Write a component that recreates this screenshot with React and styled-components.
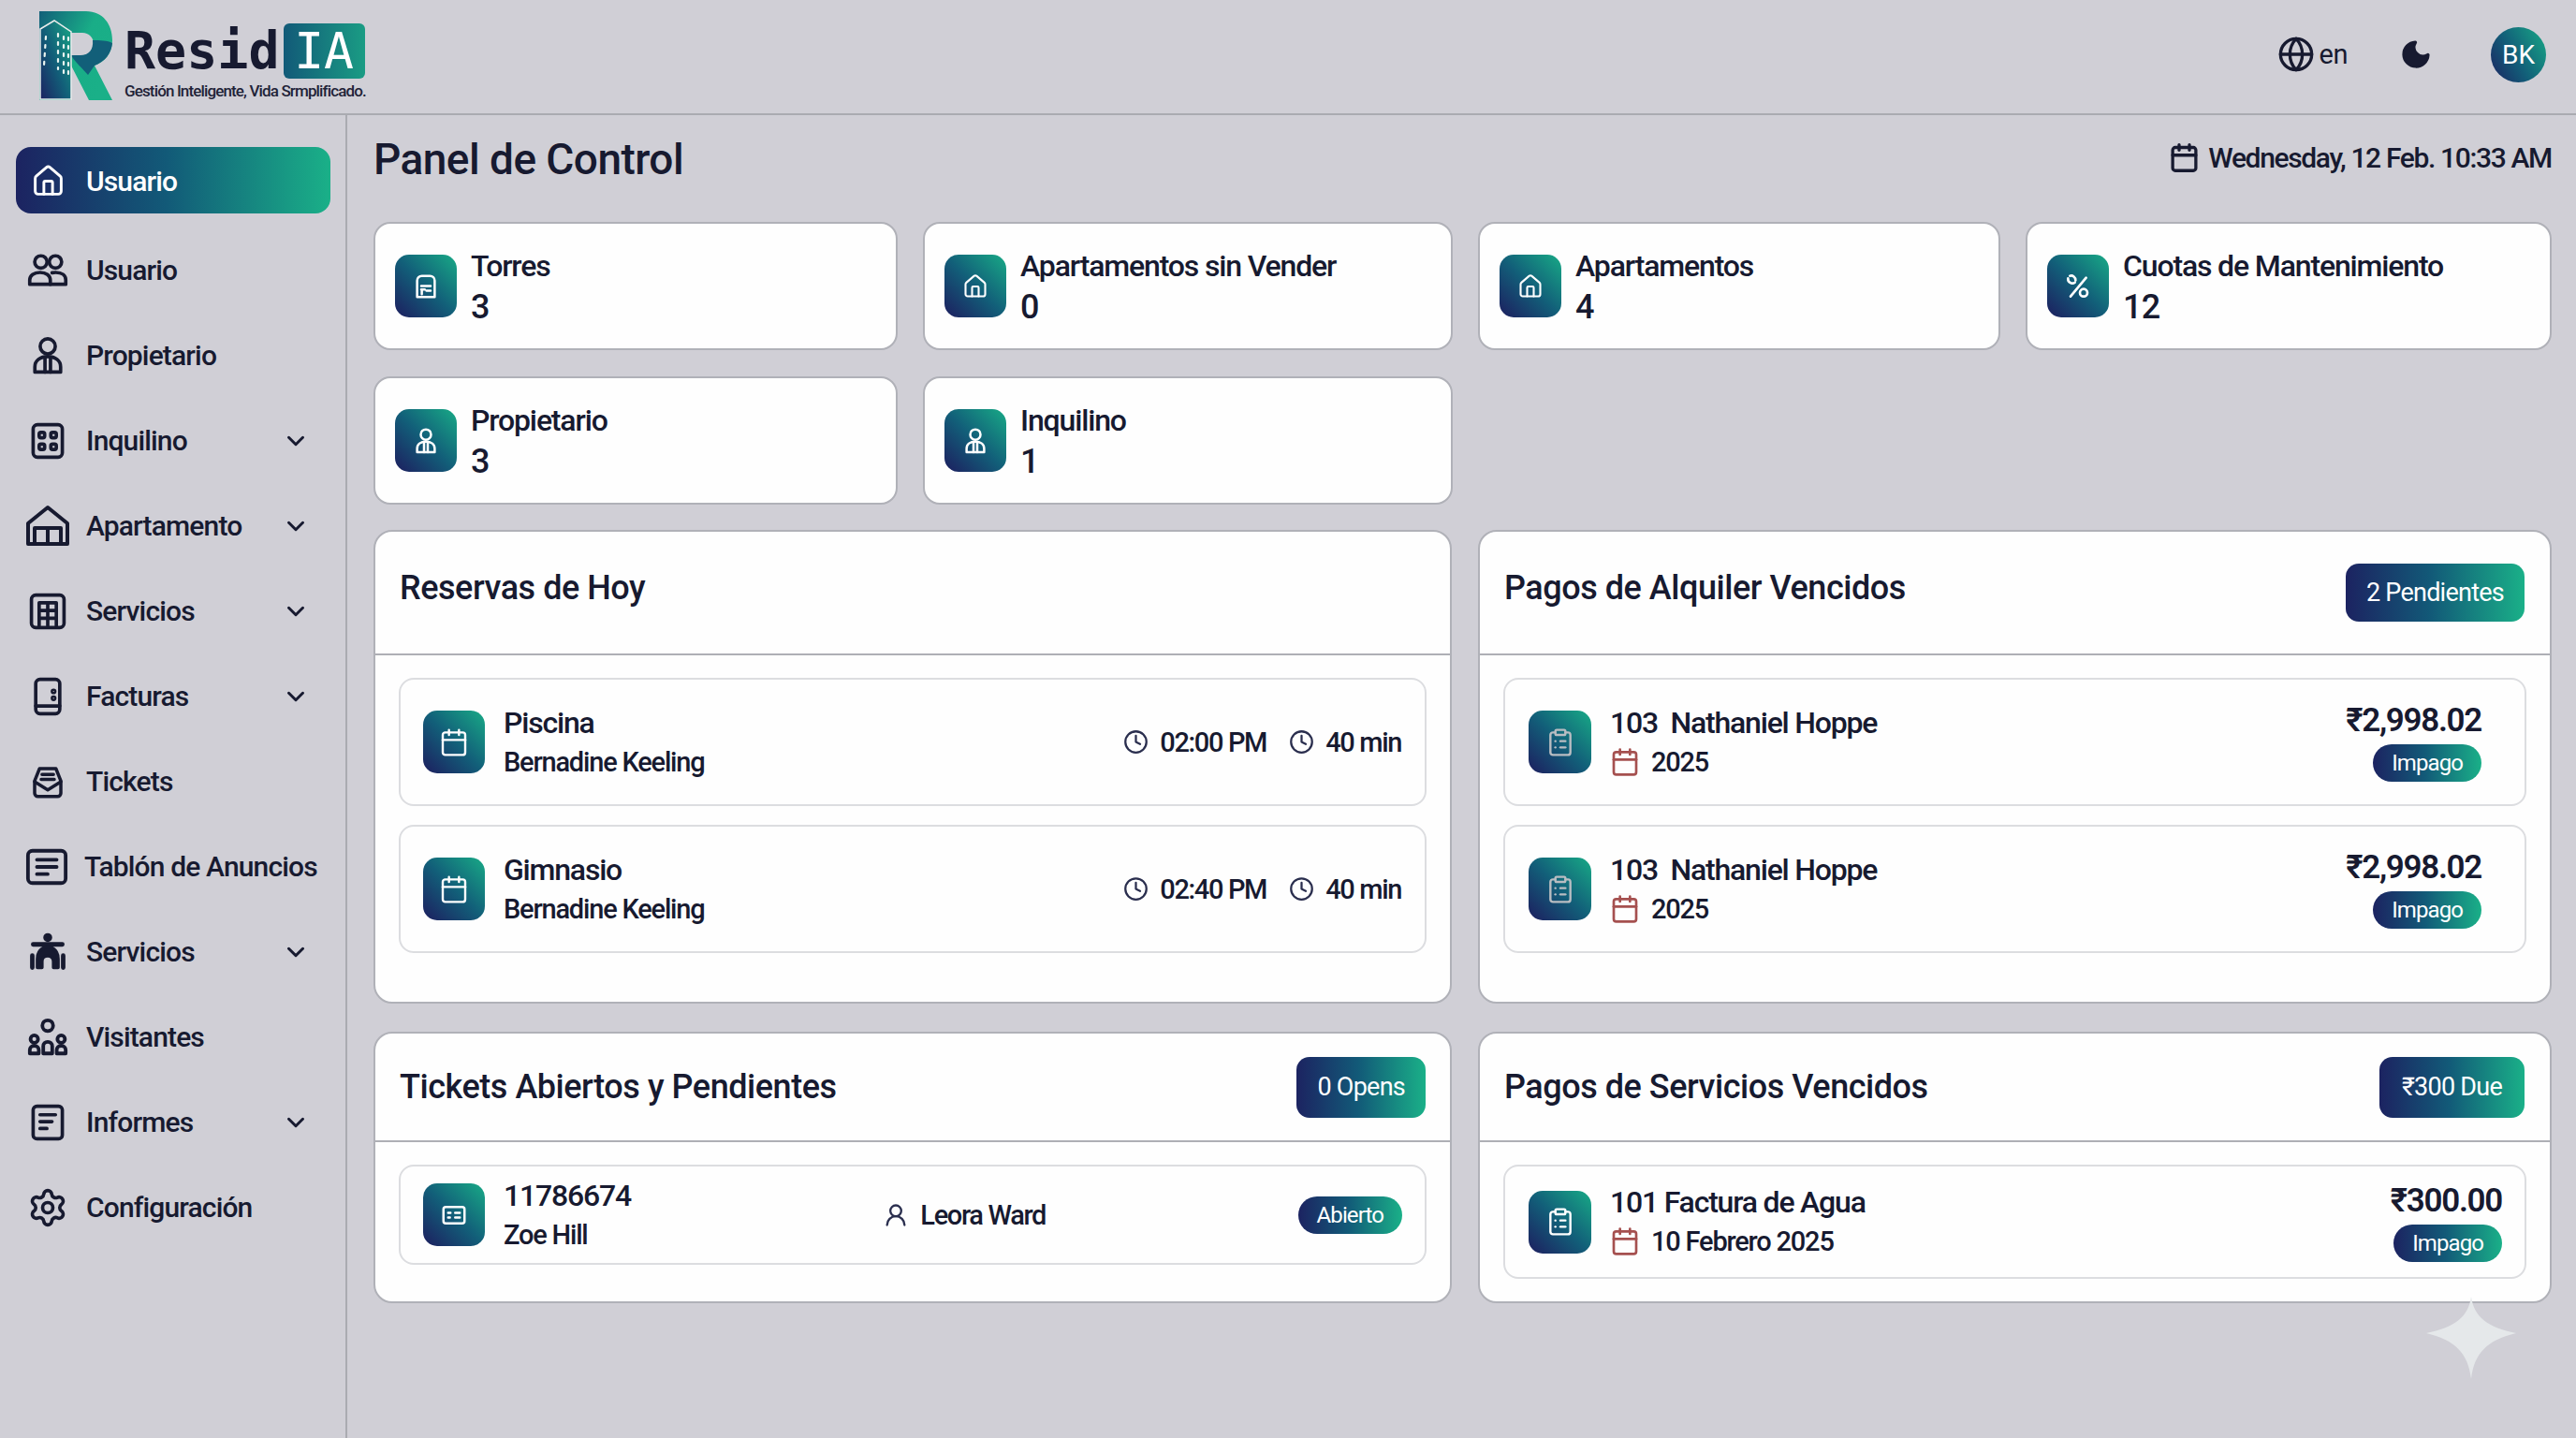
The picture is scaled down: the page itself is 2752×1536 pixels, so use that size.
import React from "react";
import styled, { createGlobalStyle } from "styled-components";
import { House, ChevronDown, Settings, Globe, Moon, Calendar, Clock, ClipboardList, UserRound } from "lucide-react";

const NAVY = "#1c2361";
const BAR = "linear-gradient(90deg, #1c2361 0%, #125a78 48%, #1ab088 100%)";
const TILE = "linear-gradient(45deg, #1c2361 4%, #125f79 50%, #18aa86 100%)";
const INK = "#171a30";

const Global = createGlobalStyle`
  html, body { margin: 0; padding: 0; }
  body {
    background: #d0cfd6;
    color: ${INK};
    font-family: Roboto, "Liberation Sans", sans-serif;
  }
  * { box-sizing: border-box; }
`;

const Page = styled.div`
  position: relative;
  width: 2752px;
  height: 1536px;
  overflow: hidden;
  background: #d0cfd6;
`;

const TopBar = styled.header`
  height: 123px;
  border-bottom: 2px solid #aaabb1;
  display: flex;
  align-items: center;
  justify-content: space-between;
  padding: 0 32px 5px 42px;
`;

const Brand = styled.div`
  display: flex;
  align-items: flex-start;
  gap: 13px;
  padding-top: 2px;
`;

const BrandText = styled.div`
  display: flex;
  flex-direction: column;
  padding-top: 13px;
`;

const Wordmark = styled.div`
  display: flex;
  align-items: center;
  gap: 4px;
  height: 59px;
  font-family: "DejaVu Sans Mono", "Liberation Mono", monospace;
  font-weight: 700;
  font-size: 55px;
  color: ${INK};
`;

const WordmarkBox = styled.span`
  width: 87px;
  height: 59px;
  border-radius: 6px;
  display: flex;
  align-items: center;
  justify-content: center;
  color: #fff;
  font-weight: 400;
  font-size: 53px;
  background: linear-gradient(90deg, #125a78, #1a9c84);
`;

const Tagline = styled.div`
  margin-top: 3px;
  font-size: 17px;
  font-weight: 500;
  letter-spacing: -0.86px;
  white-space: nowrap;
  color: #1f2338;
`;

const TopActions = styled.div`
  display: flex;
  align-items: center;
`;

const Lang = styled.div`
  display: flex;
  align-items: center;
  gap: 5px;
  font-size: 29px;
  letter-spacing: -0.5px;
  margin-right: 55px;
`;

const Avatar = styled.div`
  width: 59px;
  height: 59px;
  margin-left: 62px;
  border-radius: 50%;
  display: flex;
  align-items: center;
  justify-content: center;
  color: #fff;
  font-size: 28px;
  background: linear-gradient(60deg, #1c2361 0%, #125f79 45%, #18aa86 100%);
`;

const Columns = styled.div`
  display: flex;
  height: 1413px;
`;

const Sidebar = styled.nav`
  width: 371px;
  border-right: 2px solid #aaabb1;
  padding: 34px 16px 0 17px;
  display: flex;
  flex-direction: column;
  gap: 20px;
`;

const NavItem = styled.div`
  height: 71px;
  flex-shrink: 0;
  display: flex;
  align-items: center;
  padding: 2px 22px 0 10px;
  border-radius: 16px;
  font-size: 30px;
  font-weight: 500;
  letter-spacing: -0.85px;
  color: ${p => (p.$active ? "#fff" : INK)};
  background: ${p => (p.$active ? BAR : "transparent")};
  margin-bottom: ${p => (p.$active ? "4px" : "0")};
`;

const NavIcon = styled.span`
  width: 48px;
  height: 48px;
  margin-right: 17px;
  display: flex;
  align-items: center;
  justify-content: center;
`;

const NavLabel = styled.span`
  flex: 1;
  white-space: nowrap;
`;

const Main = styled.main`
  flex: 1;
  padding: 0 26px 0 28px;
`;

const PageHead = styled.div`
  height: 94px;
  margin-bottom: 20px;
  display: flex;
  align-items: center;
  justify-content: space-between;
`;

const PageTitle = styled.h1`
  margin: 0;
  font-size: 46px;
  font-weight: 500;
  letter-spacing: -0.55px;
`;

const DateLine = styled.div`
  display: flex;
  align-items: center;
  gap: 9px;
  font-size: 30px;
  font-weight: 500;
  letter-spacing: -1.35px;
  padding-bottom: 4px;
`;

const StatGrid = styled.section`
  display: grid;
  grid-template-columns: 560px 566px 558px 1fr;
  grid-auto-rows: 137px;
  column-gap: 27px;
  row-gap: 28px;
`;

const StatCard = styled.div`
  display: flex;
  align-items: center;
  gap: 15px;
  padding-left: 21px;
  background: #fefefe;
  border: 2px solid #b0b1b8;
  border-radius: 18px;
`;

const Tile = styled.span`
  width: ${p => p.$w || 66}px;
  height: 67px;
  flex-shrink: 0;
  border-radius: 15px;
  display: flex;
  align-items: center;
  justify-content: center;
  color: ${p => p.$tint || "#fff"};
  background: ${TILE};
`;

const StatText = styled.div`
  display: flex;
  flex-direction: column;
  gap: 8px;
  font-size: 32px;
  line-height: 36px;
  font-weight: 500;
  letter-spacing: -1.15px;
`;

const StatValue = styled.span`
  font-size: 36px;
  letter-spacing: -0.6px;
`;

const PanelGrid = styled.section`
  margin-top: 27px;
  display: grid;
  grid-template-columns: 1152px 1fr;
  column-gap: 28px;
  row-gap: 30px;
`;

const Panel = styled.article`
  display: flex;
  flex-direction: column;
  background: #fefefe;
  border: 2px solid #b0b1b8;
  border-radius: 20px;
  overflow: hidden;
`;

const PanelHead = styled.div`
  height: ${p => p.$h}px;
  flex-shrink: 0;
  display: flex;
  align-items: center;
  justify-content: space-between;
  padding: 0 ${p => p.$right || 26}px 0 26px;
  border-bottom: 2px solid #aeafb5;
`;

const PanelTitle = styled.h2`
  margin: 0 0 ${p => p.$lift || 0}px;
  font-size: 36px;
  font-weight: 500;
  letter-spacing: -0.46px;
`;

const CountBadge = styled.span`
  height: ${p => p.$h}px;
  padding: 0 ${p => p.$pad || 22}px;
  border-radius: 14px;
  display: flex;
  align-items: center;
  color: #fff;
  font-size: 27px;
  letter-spacing: -0.75px;
  background: ${BAR};
`;

const PanelBody = styled.div`
  flex: 1;
  padding: 24px 25px ${p => p.$pb || 24}px;
  display: flex;
  flex-direction: column;
  gap: 20px;
`;

const Row = styled.div`
  height: ${p => p.$h}px;
  display: flex;
  align-items: center;
  justify-content: space-between;
  padding: 0 ${p => p.$right || 24}px 0 ${p => p.$left || 24}px;
  border: 2px solid #dcdde0;
  border-radius: 16px;
`;

const RowLead = styled.div`
  display: flex;
  align-items: center;
  gap: 20px;
`;

const RowText = styled.div`
  display: flex;
  flex-direction: column;
  gap: 4px;
`;

const RowTitle = styled.div`
  font-size: 32px;
  line-height: 38px;
  font-weight: 500;
  letter-spacing: -1.2px;
  white-space: pre;
`;

const RowSub = styled.div`
  display: flex;
  align-items: center;
  gap: 12px;
  font-size: 29px;
  font-weight: 500;
  line-height: 38px;
  letter-spacing: -1.2px;
`;

const Meta = styled.div`
  display: flex;
  align-items: center;
  gap: 12px;
  font-size: 29px;
  font-weight: 500;
  letter-spacing: -1.35px;
`;

const MetaGroup = styled.div`
  display: flex;
  align-items: center;
  gap: 24px;
`;

const Amounts = styled.div`
  display: flex;
  flex-direction: column;
  align-items: flex-end;
  gap: 5px;
`;

const Amount = styled.div`
  font-size: 35px;
  line-height: 40px;
  font-weight: 600;
  letter-spacing: -1.3px;
`;

const Pill = styled.span`
  height: 40px;
  padding: 0 20px;
  border-radius: 20px;
  display: flex;
  align-items: center;
  color: #fff;
  font-size: 24px;
  letter-spacing: -0.9px;
  background: ${BAR};
`;

const Sparkle = styled.svg`
  position: absolute;
  left: 2592px;
  top: 1385px;
`;

const line = { fill: "none", stroke: "currentColor", strokeWidth: 2, strokeLinecap: "round", strokeLinejoin: "round" };

const Draw = ({ size = 44, children }) => (
  <svg width={size} height={size} viewBox="0 0 24 24" {...line}>{children}</svg>
);

const UsersIcon = () => (
  <Draw>
    <circle cx="8" cy="7" r="3.6" /><circle cx="16.5" cy="7" r="3.6" />
    <path d="M1.5 20v-2.5c0-2.6 2.4-4.4 6-4.4s6 1.8 6 4.4V20z" />
    <path d="M14.5 13.3c.7-.2 1.4-.2 2.2-.2 3.6 0 5.8 1.8 5.8 4.4V20h-9" />
  </Draw>
);
const OwnerIcon = ({ size = 44 }) => (
  <Draw size={size}>
    <circle cx="12" cy="6.5" r="4.4" />
    <path d="M4.5 21.5v-3c0-3.6 3-6 7.5-6s7.5 2.4 7.5 6v3z" />
    <path d="M10.4 13v8.5M13.6 13v8.5" />
  </Draw>
);
const TenantIcon = () => (
  <Draw>
    <rect x="3.5" y="2.5" width="17" height="19" rx="2.5" />
    <rect x="7" y="7" width="3.2" height="3.2" rx="1" /><rect x="13.8" y="7" width="3.2" height="3.2" rx="1" />
    <rect x="7" y="13.8" width="3.2" height="3.2" rx="1" /><rect x="13.8" y="13.8" width="3.2" height="3.2" rx="1" />
  </Draw>
);
const BarnIcon = () => (
  <Draw size={50}>
    <path d="M1.5 21.5V10.5L12 2l10.5 8.5v11z" />
    <path d="M5 21.5V13h14v8.5M12 13v8.5" />
  </Draw>
);
const BuildingIcon = () => (
  <Draw>
    <rect x="2.5" y="2.5" width="19" height="19" rx="2.5" />
    <path d="M7 20.5V7h10v13.5M7 11.5h10M7 16h10M12 7v13.5" />
  </Draw>
);
const DeviceIcon = () => (
  <Draw>
    <rect x="5" y="2" width="14" height="20" rx="2.5" />
    <path d="M5 17.5h14" />
    <circle cx="15.4" cy="9" r=".7" /><circle cx="15.4" cy="13" r=".7" />
  </Draw>
);
const TrayIcon = () => (
  <Draw size={42}>
    <path d="M7 4h10l3 7.5V19a2 2 0 0 1-2 2H6a2 2 0 0 1-2-2v-7.5z" />
    <path d="M4 12l8 5 8-5M8.5 7.5h7M8 10.5h8" />
  </Draw>
);
const BoardIcon = () => (
  <Draw size={46}>
    <rect x="1.5" y="3" width="21" height="18" rx="2.5" />
    <path d="M6.5 8h11M6.5 12h11M6.5 16h6" />
  </Draw>
);
const ConciergeIcon = () => (
  <Draw size={44}>
    <circle cx="12" cy="3.5" r="1.6" fill="currentColor" />
    <path d="M3.5 7.5h17" strokeWidth="2.6" />
    <path d="M6 21v-5c0-4 2.4-7 6-7s6 3 6 7v5h-2.6v-3.5c0-2-1.3-3.3-3.4-3.3s-3.4 1.3-3.4 3.3V21z" fill="currentColor" />
    <path d="M3 14v7M21 14v7" strokeWidth="2.6" />
  </Draw>
);
const VisitorsIcon = () => (
  <Draw size={46}>
    <circle cx="12" cy="5.5" r="3" />
    <circle cx="4.5" cy="13" r="2.1" /><circle cx="19.5" cy="13" r="2.1" />
    <path d="M2 21v-2c0-1.3 1-2.3 2.5-2.3S7 17.7 7 19v2zM17 21v-2c0-1.3 1-2.3 2.5-2.3S22 17.7 22 19v2z" />
    <path d="M9.5 21v-4c0-1.5 1-2.5 2.5-2.5s2.5 1 2.5 2.5v4z" />
  </Draw>
);
const ReportIcon = () => (
  <Draw>
    <rect x="3.5" y="2.5" width="17" height="19" rx="2.2" />
    <path d="M7.5 7.5h9M7.5 11.5h7M7.5 15.5h4" />
  </Draw>
);
const TowerIcon = () => (
  <Draw size={30}>
    <path d="M4.5 21V7a4 4 0 0 1 4-4h7a4 4 0 0 1 4 4v14z" />
    <path d="M8 11.5h8M8 14.5h3M12.5 15.5h3.5M8.500 14.5v4" />
  </Draw>
);
const FeeIcon = () => (
  <Draw size={32}>
    <path d="M18.5 5L6 20" />
    <path d="M4 5.5a3.5 3.5 0 0 0 5.500 3.300M5.500 3.500A3.500 3.500 0 0 1 10 7" />
    <circle cx="16.5" cy="17" r="3" />
  </Draw>
);
const TicketIcon = () => (
  <Draw size={30}>
    <rect x="3" y="5" width="18" height="14" rx="2" />
    <path d="M7 10h2M13 10h4M7 14h1.5M13 14h4" />
  </Draw>
);

const navItems = [
  { label: "Usuario", icon: <House size={37} strokeWidth={1.9} />, active: true },
  { label: "Usuario", icon: <UsersIcon /> },
  { label: "Propietario", icon: <OwnerIcon /> },
  { label: "Inquilino", icon: <TenantIcon />, sub: true },
  { label: "Apartamento", icon: <BarnIcon />, sub: true },
  { label: "Servicios", icon: <BuildingIcon />, sub: true },
  { label: "Facturas", icon: <DeviceIcon />, sub: true },
  { label: "Tickets", icon: <TrayIcon /> },
  { label: "Tablón de Anuncios", icon: <BoardIcon /> },
  { label: "Servicios", icon: <ConciergeIcon />, sub: true },
  { label: "Visitantes", icon: <VisitorsIcon /> },
  { label: "Informes", icon: <ReportIcon />, sub: true },
  { label: "Configuración", icon: <Settings size={44} strokeWidth={2} /> },
];

const stats = [
  { title: "Torres", value: "3", icon: <TowerIcon /> },
  { title: "Apartamentos sin Vender", value: "0", icon: <House size={28} strokeWidth={1.8} /> },
  { title: "Apartamentos", value: "4", icon: <House size={28} strokeWidth={1.8} /> },
  { title: "Cuotas de Mantenimiento", value: "12", icon: <FeeIcon /> },
  { title: "Propietario", value: "3", icon: <OwnerIcon size={30} /> },
  { title: "Inquilino", value: "1", icon: <OwnerIcon size={30} /> },
];

const bookings = [
  { name: "Piscina", time: "02:00 PM" },
  { name: "Gimnasio", time: "02:40 PM" },
];

const Logo = () => (
  <svg width="78" height="95" viewBox="0 0 78 95">
    <defs>
      <linearGradient id="logoR" x1="0" y1="0" x2="1" y2="0.6">
        <stop offset="0" stopColor="#125f79" />
        <stop offset="0.6" stopColor="#19ad87" />
        <stop offset="1" stopColor="#1ab088" />
      </linearGradient>
      <linearGradient id="logoTower" x1="0" y1="1" x2="1" y2="0.1">
        <stop offset="0" stopColor={NAVY} />
        <stop offset="0.5" stopColor="#125f79" />
        <stop offset="1" stopColor="#17a184" />
      </linearGradient>
    </defs>
    <path fillRule="evenodd" fill="url(#logoR)" d="M0 0H50C68 0 78 14 78 31C78 45 70 54 59 58L78 95H53L34 58V95H0ZM34 23V47H46C53 47 58 42 58 35C58 28 53 23 46 23Z" />
    <path fill="#125f79" d="M44 47C53 47 58 41 57 31C64 31 73 31 78 34C77 45 70 54 59 58L52 68C47 62 38 54 34 47Z" />
    <path fill="url(#logoTower)" stroke="#e9ecec" strokeWidth="1.5" d="M1 19L16 10L34 22V94H1Z" />
    <path fill="none" stroke="#e9f4f0" strokeWidth="2.2" strokeLinecap="round" strokeDasharray="3 6" d="M7 27L5 58M20 24V62M26 27V68M31 28V70" />
  </svg>
);

function App() {
  return (
    <Page>
      <Global />
      <TopBar>
        <Brand>
          <Logo />
          <BrandText>
            <Wordmark>Resid<WordmarkBox>IA</WordmarkBox></Wordmark>
            <Tagline>Gestión Inteligente, Vida Srmplificado.</Tagline>
          </BrandText>
        </Brand>
        <TopActions>
          <Lang><Globe size={40} strokeWidth={2} />en</Lang>
          <Moon size={36} fill={INK} strokeWidth={1.5} />
          <Avatar>BK</Avatar>
        </TopActions>
      </TopBar>
      <Columns>
        <Sidebar>
          {navItems.map((item, i) => (
            <NavItem key={i} $active={item.active}>
              <NavIcon>{item.icon}</NavIcon>
              <NavLabel>{item.label}</NavLabel>
              {item.sub && <ChevronDown size={30} strokeWidth={2.4} />}
            </NavItem>
          ))}
        </Sidebar>
        <Main>
          <PageHead>
            <PageTitle>Panel de Control</PageTitle>
            <DateLine><Calendar size={33} strokeWidth={2.4} />Wednesday, 12 Feb. 10:33 AM</DateLine>
          </PageHead>
          <StatGrid>
            {stats.map(s => (
              <StatCard key={s.title}>
                <Tile>{s.icon}</Tile>
                <StatText><span>{s.title}</span><StatValue>{s.value}</StatValue></StatText>
              </StatCard>
            ))}
          </StatGrid>
          <PanelGrid>
            <Panel>
              <PanelHead $h={132}><PanelTitle $lift={10}>Reservas de Hoy</PanelTitle></PanelHead>
              <PanelBody $pb={52}>
                {bookings.map(b => (
                  <Row key={b.name} $h={137} $right={25}>
                    <RowLead>
                      <Tile><Calendar size={32} strokeWidth={1.8} /></Tile>
                      <RowText>
                        <RowTitle>{b.name}</RowTitle>
                        <RowSub>Bernadine Keeling</RowSub>
                      </RowText>
                    </RowLead>
                    <MetaGroup>
                      <Meta><Clock size={27} strokeWidth={2} color="#2a2e4e" />{b.time}</Meta>
                      <Meta><Clock size={27} strokeWidth={2} color="#2a2e4e" />40 min</Meta>
                    </MetaGroup>
                  </Row>
                ))}
              </PanelBody>
            </Panel>
            <Panel>
              <PanelHead $h={132} $right={27}>
                <PanelTitle $lift={10}>Pagos de Alquiler Vencidos</PanelTitle>
                <CountBadge $h={62}>2 Pendientes</CountBadge>
              </PanelHead>
              <PanelBody $pb={52}>
                {[0, 1].map(i => (
                  <Row key={i} $h={137} $left={25} $right={46}>
                    <RowLead>
                      <Tile $w={67} $tint="#b9bdc2"><ClipboardList size={32} strokeWidth={1.8} /></Tile>
                      <RowText>
                        <RowTitle>{"103  Nathaniel Hoppe"}</RowTitle>
                        <RowSub><Calendar size={32} strokeWidth={2} color="#a5504f" />2025</RowSub>
                      </RowText>
                    </RowLead>
                    <Amounts>
                      <Amount>₹2,998.02</Amount>
                      <Pill>Impago</Pill>
                    </Amounts>
                  </Row>
                ))}
              </PanelBody>
            </Panel>
            <Panel>
              <PanelHead $h={116}>
                <PanelTitle>Tickets Abiertos y Pendientes</PanelTitle>
                <CountBadge $h={65}>0 Opens</CountBadge>
              </PanelHead>
              <PanelBody>
                <Row $h={107}>
                  <RowLead>
                    <Tile><TicketIcon /></Tile>
                    <RowText>
                      <RowTitle>11786674</RowTitle>
                      <RowSub>Zoe Hill</RowSub>
                    </RowText>
                  </RowLead>
                  <Meta><UserRound size={28} strokeWidth={2} color="#2a2e4e" />Leora Ward</Meta>
                  <Pill>Abierto</Pill>
                </Row>
              </PanelBody>
            </Panel>
            <Panel>
              <PanelHead $h={116} $right={27}>
                <PanelTitle>Pagos de Servicios Vencidos</PanelTitle>
                <CountBadge $h={65} $pad={24}>₹300 Due</CountBadge>
              </PanelHead>
              <PanelBody>
                <Row $h={122} $left={25}>
                  <RowLead>
                    <Tile $w={67}><ClipboardList size={32} strokeWidth={1.8} /></Tile>
                    <RowText>
                      <RowTitle>101 Factura de Agua</RowTitle>
                      <RowSub><Calendar size={32} strokeWidth={2} color="#a5504f" />10 Febrero 2025</RowSub>
                    </RowText>
                  </RowLead>
                  <Amounts>
                    <Amount>₹300.00</Amount>
                    <Pill>Impago</Pill>
                  </Amounts>
                </Row>
              </PanelBody>
            </Panel>
          </PanelGrid>
        </Main>
      </Columns>
      <Sparkle width="96" height="88" viewBox="0 0 96 88">
        <path fill="#e5e8ea" d="M48 0C51 22 66 33 96 39C66 46 51 60 48 88C45 60 30 46 0 39C30 33 45 22 48 0Z" />
      </Sparkle>
    </Page>
  );
}

export default App;
